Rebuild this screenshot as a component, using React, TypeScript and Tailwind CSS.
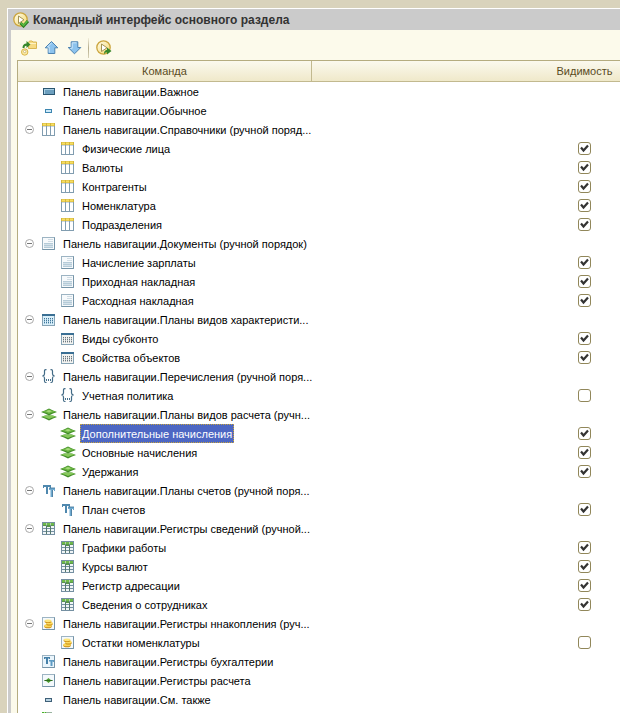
import React, { useState } from 'react';

type IconName =
  | 'important'
  | 'normal'
  | 'catalog'
  | 'document'
  | 'characteristics'
  | 'characteristicsItem'
  | 'enumeration'
  | 'calculation'
  | 'accounts'
  | 'infoRegister'
  | 'accumulation'
  | 'accounting'
  | 'calcRegister'
  | 'seeAlso'
  | 'create';

interface Command {
  name: string;
  visible: boolean;
}

interface Group {
  title: string;
  icon: IconName;
  childIcon?: IconName;
  items?: Command[];
}

const groups: Group[] = [
  { title: 'Панель навигации.Важное', icon: 'important' },
  { title: 'Панель навигации.Обычное', icon: 'normal' },
  {
    title: 'Панель навигации.Справочники (ручной поряд...',
    icon: 'catalog',
    items: [
      { name: 'Физические лица', visible: true },
      { name: 'Валюты', visible: true },
      { name: 'Контрагенты', visible: true },
      { name: 'Номенклатура', visible: true },
      { name: 'Подразделения', visible: true },
    ],
  },
  {
    title: 'Панель навигации.Документы (ручной порядок)',
    icon: 'document',
    items: [
      { name: 'Начисление зарплаты', visible: true },
      { name: 'Приходная накладная', visible: true },
      { name: 'Расходная накладная', visible: true },
    ],
  },
  {
    title: 'Панель навигации.Планы видов характеристи...',
    icon: 'characteristics',
    childIcon: 'characteristicsItem',
    items: [
      { name: 'Виды субконто', visible: true },
      { name: 'Свойства объектов', visible: true },
    ],
  },
  {
    title: 'Панель навигации.Перечисления (ручной поря...',
    icon: 'enumeration',
    items: [{ name: 'Учетная политика', visible: false }],
  },
  {
    title: 'Панель навигации.Планы видов расчета (ручн...',
    icon: 'calculation',
    items: [
      { name: 'Дополнительные начисления', visible: true },
      { name: 'Основные начисления', visible: true },
      { name: 'Удержания', visible: true },
    ],
  },
  {
    title: 'Панель навигации.Планы счетов (ручной поря...',
    icon: 'accounts',
    items: [{ name: 'План счетов', visible: true }],
  },
  {
    title: 'Панель навигации.Регистры сведений (ручной...',
    icon: 'infoRegister',
    items: [
      { name: 'Графики работы', visible: true },
      { name: 'Курсы валют', visible: true },
      { name: 'Регистр адресации', visible: true },
      { name: 'Сведения о сотрудниках', visible: true },
    ],
  },
  {
    title: 'Панель навигации.Регистры ннакопления (руч...',
    icon: 'accumulation',
    items: [{ name: 'Остатки номенклатуры', visible: false }],
  },
  { title: 'Панель навигации.Регистры бухгалтерии', icon: 'accounting' },
  { title: 'Панель навигации.Регистры расчета', icon: 'calcRegister' },
  { title: 'Панель навигации.См. также', icon: 'seeAlso' },
  { title: '', icon: 'create' },
];

const Frame: React.FC<{ fill?: string }> = ({ fill = '#f4f9fc' }) => (
  <>
    <rect x="1.5" y="1.5" width="12" height="12" fill={fill} stroke="#9db4c3" />
    <path d="M1.5 13.5h12v-12" fill="none" stroke="#7594a8" />
  </>
);

// dark top bar, pale body and a block of dots
const DottedPanel: React.FC<{ fill: string; dots: string; faint: string }> = ({ fill, dots, faint }) => (
  <>
    <rect x="1.5" y="2.5" width="12" height="11" fill={fill} stroke="#86a3b5" />
    <path d="M1 3h13" stroke="#3a6f94" strokeWidth="2" />
    <path d="M3 6.5h9" stroke={faint} strokeDasharray="1 1" />
    <path d="M3 9.5h9" stroke={faint} strokeWidth="5" strokeDasharray="1 1" />
    <path d="M3 6.5h9M3 8.5h9M3 10.5h9" stroke={dots} strokeDasharray="1 1" />
  </>
);

const drawings: Record<IconName, React.ReactNode> = {
  important: (
    <>
      <rect x="2" y="4" width="12" height="7" fill="#2b5671" />
      <rect x="3" y="5" width="10" height="5" fill="#a9cfe4" />
      <rect x="4" y="6" width="9" height="4" fill="#6c9fbe" />
    </>
  ),
  normal: (
    <>
      <rect x="4" y="6" width="7" height="4" fill="#3d86b0" />
      <rect x="5" y="7" width="5" height="2" fill="#cdeafa" />
    </>
  ),
  seeAlso: (
    <>
      <rect x="4" y="6" width="7" height="4" fill="#3f6078" />
      <rect x="5" y="7" width="5" height="2" fill="#b9d3e2" />
    </>
  ),
  catalog: (
    <>
      <rect x="1" y="1" width="13" height="13" fill="#819db0" />
      <rect x="2" y="4" width="3" height="9" fill="#fff" />
      <rect x="6" y="4" width="3" height="9" fill="#fff" />
      <rect x="10" y="4" width="3" height="9" fill="#fff" />
      <path d="M1 2.500h13" stroke="#d3b53c" strokeWidth="3" />
      <path d="M2 2.500h3M6 2.500h3M10 2.500h3" stroke="#f7df62" strokeWidth="2" />
      <path d="M2 4.500h3M6 4.500h3M10 4.500h3" stroke="#ccd6dc" />
    </>
  ),
  document: (
    <>
      <Frame fill="#f7fafc" />
      <path d="M7 3.5h5M7 5.5h5" stroke="#d0dce4" />
      <path d="M3 8h9M3 11h9" stroke="#d5e2ea" strokeWidth="2" />
      <path d="M3 7.5h9M3 9.5h9M3 11.5h9" stroke="#b5cbd8" />
    </>
  ),
  characteristics: <DottedPanel fill="#d9effa" dots="#3f7699" faint="#9fc3d8" />,
  characteristicsItem: <DottedPanel fill="#f4f4f1" dots="#6a767e" faint="#bfc5c8" />,
  enumeration: (
    <>
      <path
        d="M5.500 .7H4.700Q3.500 .7 3.500 2v3Q3.500 6.500 1.500 7q2 .5 2 2v3q0 1.500 1.200 1.500h.8M9.500 .7h.8q1.200 0 1.200 1.300v3q0 1.500 2 2q-2 .5-2 2v3q0 1.500-1.200 1.500h-.8"
        fill="none"
        stroke="#426b86"
        strokeWidth="1.200"
      />
      <path d="M5 10h1v2H5zM7 10h1v2H7zM9 10h1v2H9z" fill="#47718c" />
    </>
  ),
  calculation: (
    <>
      <path d="M0 10l4-1.500h8l4 1.500-4 1.500-4 2-4-2z" fill="#3f8a26" />
      <path d="M1 9.700l4-1.200h6l4 1.200-4 1L8 12l-3-1.300z" fill="#86c85a" />
      <path d="M0 5l4-1.500L8 1.500l4 2L16 5l-4 1.500-4 2-4-2z" fill="#3f8a26" />
      <path d="M1 4.700l4-1.200 3-1.300 3 1.300 4 1.200-4 1L8 7 5 5.700z" fill="#6cb644" />
      <path d="M5 4.200l3-1.200 3 1.200L8 5.500z" fill="#a5da78" />
    </>
  ),
  accounts: (
    <>
      <path d="M2 2h8v3H9V4H7v7H5V4H3v1H2z" fill="#4f88ae" />
      <path d="M8 5h6v3h-1V7h-1.500v7h-2V7H8z" fill="#6ea9cf" />
      <path d="M8 5h6M11.500 7v7" fill="none" stroke="#386f94" strokeWidth=".8" />
    </>
  ),
  infoRegister: (
    <>
      <rect x="1" y="1" width="13" height="13" fill="#7590a2" />
      <path d="M2 5h3v2H2zM6 5h3v2H6zM10 5h3v2h-3zM2 8h3v2H2zM6 8h3v2H6zM10 8h3v2h-3zM2 11h3v2H2zM6 11h3v2H6zM10 11h3v2h-3z" fill="#f0f5f7" />
      <path d="M2 2h11v2H2z" fill="#b5d3a8" />
      <path d="M2 2h3v2H2zM6 2h3v2H6zM10 2h3v2h-3z" fill="#6db94a" />
      <path d="M2 4h3v1H2zM10 4h3v1h-3zM6 4h3v2H6z" fill="#58964a" />
      <path d="M5.500 5v8M9.500 5v8" stroke="#56796d" />
    </>
  ),
  accumulation: (
    <>
      <Frame />
      <ellipse cx="7" cy="10.500" rx="3.800" ry="1.800" fill="#c98a10" />
      <ellipse cx="7" cy="9.700" rx="3.800" ry="1.600" fill="#f8d657" />
      <ellipse cx="8.500" cy="8" rx="3.200" ry="1.500" fill="#c98a10" />
      <ellipse cx="8.500" cy="7.200" rx="3.200" ry="1.400" fill="#fbdc62" />
      <ellipse cx="7" cy="5.600" rx="3.400" ry="1.500" fill="#cf9216" />
      <ellipse cx="7" cy="4.800" rx="3.400" ry="1.400" fill="#fde67c" />
    </>
  ),
  accounting: (
    <>
      <Frame fill="#eaf5fc" />
      <path d="M3 3h6v2H8V4.500H7V10H5V4.500H4V5H3z" fill="#4580a8" />
      <path d="M8 6h5v2h-1v-.5h-.5V12h-2V7.500H8z" fill="#5d9bc4" />
    </>
  ),
  calcRegister: (
    <>
      <Frame />
      <path d="M3 7.500l2.500-.7L7.500 5l2 1.800 2.500 .7-2.500 .7-2 1.800-2-1.800z" fill="#4f9d33" />
      <path d="M3.500 7.500h8" stroke="#2c6d1c" />
    </>
  ),
  create: (
    <>
      <path d="M3.500 14V1.500h7l3 3V14" fill="#f6faf4" stroke="#9bb3a0" />
      <path d="M10.500 1.500v3h3" fill="none" stroke="#7fa08a" />
      <path d="M1 1h4v4H1z" fill="#48b02c" />
      <path d="M3 1h1v4H3z" fill="#b6e59c" />
    </>
  ),
};

const RowIcon: React.FC<{ name: IconName }> = ({ name }) => (
  <svg className="h-4 w-4 shrink-0" viewBox="0 0 16 16" aria-hidden="true">
    {drawings[name]}
  </svg>
);

const PlayDisc: React.FC = () => (
  <>
    <defs>
      <linearGradient id="disc" x1="0" y1="0" x2="1" y2="1">
        <stop offset="0" stopColor="#fffdf0" />
        <stop offset="1" stopColor="#f5d869" />
      </linearGradient>
    </defs>
    <circle cx="7.500" cy="7.500" r="6.700" fill="url(#disc)" stroke="#cba53e" strokeWidth="1.300" />
    <path d="M5.500 4v7.500l5.500-3.700z" fill="#fff" stroke="#a39354" />
  </>
);

const toolClass = 'flex h-4 w-4 cursor-pointer items-center justify-center';

const Toolbar: React.FC = () => (
  <div className="flex h-[30px] items-center pt-[6px] pl-1">
    <div className="flex gap-[7px]">
      <button type="button" aria-label="Переместить в группу" className={toolClass}>
        <svg className="h-4 w-4" viewBox="0 0 16 16">
          <path d="M7.500 2.500l1-1.500h2.500l1 1h3.500v6.500h-8z" fill="#f6da83" stroke="#d8b552" />
          <path d="M8 3.500h7" stroke="#fdf2c4" />
          <circle cx="3.700" cy="12" r="3.200" fill="#fbeaa4" stroke="#d9b54c" />
          <circle cx="3.700" cy="11.500" r="1.200" fill="#fff" stroke="#b89c4a" strokeWidth=".6" />
          <path d="M1.500 8c0-3 1.500-4.500 4-4.500V1L9.500 4.500 5.500 8V5.700C4 5.700 3.500 6.500 3.500 8z" fill="#36872a" />
        </svg>
      </button>
      <button type="button" aria-label="Вверх" className={toolClass}>
        <svg className="h-4 w-4" viewBox="0 0 16 16">
          <path d="M7.500 1.500l6.300 6.300h-3v5.700H4.200V7.800h-3z" fill="#8cc3ee" stroke="#4c82b0" strokeLinejoin="round" />
          <path d="M7.500 3L3.500 7h1.700v5.500" fill="none" stroke="#cce7fb" />
        </svg>
      </button>
      <button type="button" aria-label="Вниз" className={toolClass}>
        <svg className="h-4 w-4" viewBox="0 0 16 16">
          <path d="M7.500 13.800l6.300-6.300h-3V1.800H4.200v5.700h-3z" fill="#8cc3ee" stroke="#4c82b0" strokeLinejoin="round" />
          <path d="M3.300 8.300h1.900V2.800h4.300" fill="none" stroke="#cce7fb" />
        </svg>
      </button>
    </div>
    <span className="mr-[7px] ml-[5px] h-5 w-px bg-gradient-to-b from-[#f3efdc] via-[#b5ac8c] to-[#d8d2b8]"></span>
    <button type="button" aria-label="Выполнить" className={toolClass}>
      <svg className="h-4 w-4" viewBox="0 0 16 16">
        <PlayDisc />
        <path d="M8 14.500c0-3.500 1.500-4.500 3-4.500V7.500l4.500 3.500-4.500 3.500v-2.300c-1.500 0-2.200 .8-3 2.300z" fill="#36872a" />
      </svg>
    </button>
  </div>
);

interface LabelCellProps {
  title: string;
  icon: IconName;
  nested?: boolean;
  selected?: boolean;
  collapsed?: boolean;
  onToggle?: () => void;
  onSelect: () => void;
}

const LabelCell: React.FC<LabelCellProps> = ({ title, icon, nested, selected, collapsed, onToggle, onSelect }) => (
  <td className="p-0">
    <div className={`flex h-[19px] items-center whitespace-nowrap ${nested ? 'pl-[42px]' : 'pl-[7px]'}`}>
      {!nested && (
        <span className="mr-[7px] flex w-[9px] shrink-0">
          {onToggle && (
            <button type="button" aria-label={title} aria-expanded={!collapsed} onClick={onToggle} className="cursor-pointer">
              <svg className="h-[9px] w-[9px]" viewBox="0 0 9 9">
                <circle cx="4.500" cy="4.500" r="4" fill="#fff" stroke="#a9a9a9" />
                <path d={collapsed ? 'M2 4.500h5M4.500 2v5' : 'M2 4.500h5'} stroke="#777" />
              </svg>
            </button>
          )}
        </span>
      )}
      <RowIcon name={icon} />
      <span
        onClick={onSelect}
        className={`ml-1 flex h-[19px] cursor-default items-center border px-px ${
          selected ? 'border-dotted border-[#c9a53c] bg-[#4d67c3] text-white' : 'border-transparent text-black'
        }`}
      >
        {title}
      </span>
    </div>
  </td>
);

export default function App() {
  const [collapsed, setCollapsed] = useState<string[]>([]);
  const [selected, setSelected] = useState<string>('Дополнительные начисления');
  const [hidden, setHidden] = useState<string[]>(
    groups.flatMap((g) => g.items ?? []).filter((c) => !c.visible).map((c) => c.name)
  );

  const toggle = (list: string[], value: string) =>
    list.includes(value) ? list.filter((v) => v !== value) : [...list, value];

  return (
    <div className="h-screen overflow-hidden bg-[#d9d3bc] pt-2 pl-[7px] font-['Liberation_Sans',sans-serif] text-[11px] leading-[14px]">
      <div className="flex h-full flex-col border-t border-l border-white bg-[#cbcbcb] pl-[3px]">
        <header className="flex h-[21px] shrink-0 items-center gap-1 pl-[2px]">
          <svg className="h-4 w-4" viewBox="0 0 16 16" aria-hidden="true">
            <PlayDisc />
            <path d="M7.500 11l3 3 4.500-5" fill="none" stroke="#2f7d22" strokeWidth="3" />
            <path d="M8 11l2.500 2.500L14.500 9" fill="none" stroke="#5cc043" strokeWidth="1.300" />
          </svg>
          <h1 className="text-[12px] font-bold text-[#333]">Командный интерфейс основного раздела</h1>
        </header>

        <main className="flex-1 bg-[#fcfaeb] pl-[6px]">
          <Toolbar />
          <table className="w-full table-fixed border-separate border-spacing-0 border-t border-l border-[#b5ac80] bg-white">
            <thead>
              <tr className="bg-gradient-to-b from-[#fbf9ee] to-[#efe8c8] text-[#5a4c1e]">
                <th className="h-[21px] w-[294px] border-r border-b border-[#c2b98f] p-0 text-center font-normal">Команда</th>
                <th className="border-b border-[#c2b98f] p-0 font-normal">
                  <span className="ml-auto block w-[71px]">Видимость</span>
                </th>
              </tr>
            </thead>
            <tbody>
              {groups.map((group) => (
                <React.Fragment key={group.icon}>
                  <tr>
                    <LabelCell
                      title={group.title}
                      icon={group.icon}
                      selected={selected === group.title}
                      collapsed={collapsed.includes(group.title)}
                      onToggle={group.items && (() => setCollapsed(toggle(collapsed, group.title)))}
                      onSelect={() => setSelected(group.title)}
                    />
                    <td className="p-0"></td>
                  </tr>
                  {!collapsed.includes(group.title) &&
                    group.items?.map((item) => (
                      <tr key={item.name}>
                        <LabelCell
                          title={item.name}
                          icon={group.childIcon ?? group.icon}
                          nested
                          selected={selected === item.name}
                          onSelect={() => setSelected(item.name)}
                        />
                        <td className="p-0">
                          <label className="ml-auto grid w-[71px] place-items-center">
                            <input
                              type="checkbox"
                              aria-label={item.name}
                              checked={!hidden.includes(item.name)}
                              onChange={() => setHidden(toggle(hidden, item.name))}
                              className="peer col-start-1 row-start-1 h-[13px] w-[13px] appearance-none rounded-[3px] border border-[#91875a] bg-white"
                            />
                            <svg
                              className="pointer-events-none invisible col-start-1 row-start-1 h-[9px] w-[9px] peer-checked:visible"
                              viewBox="0 0 9 9"
                              aria-hidden="true"
                            >
                              <path d="M1 3.500l2.500 3L8 1.500" fill="none" stroke="#333" strokeWidth="2.200" />
                            </svg>
                          </label>
                        </td>
                      </tr>
                    ))}
                </React.Fragment>
              ))}
            </tbody>
          </table>
        </main>
      </div>
    </div>
  );
}
